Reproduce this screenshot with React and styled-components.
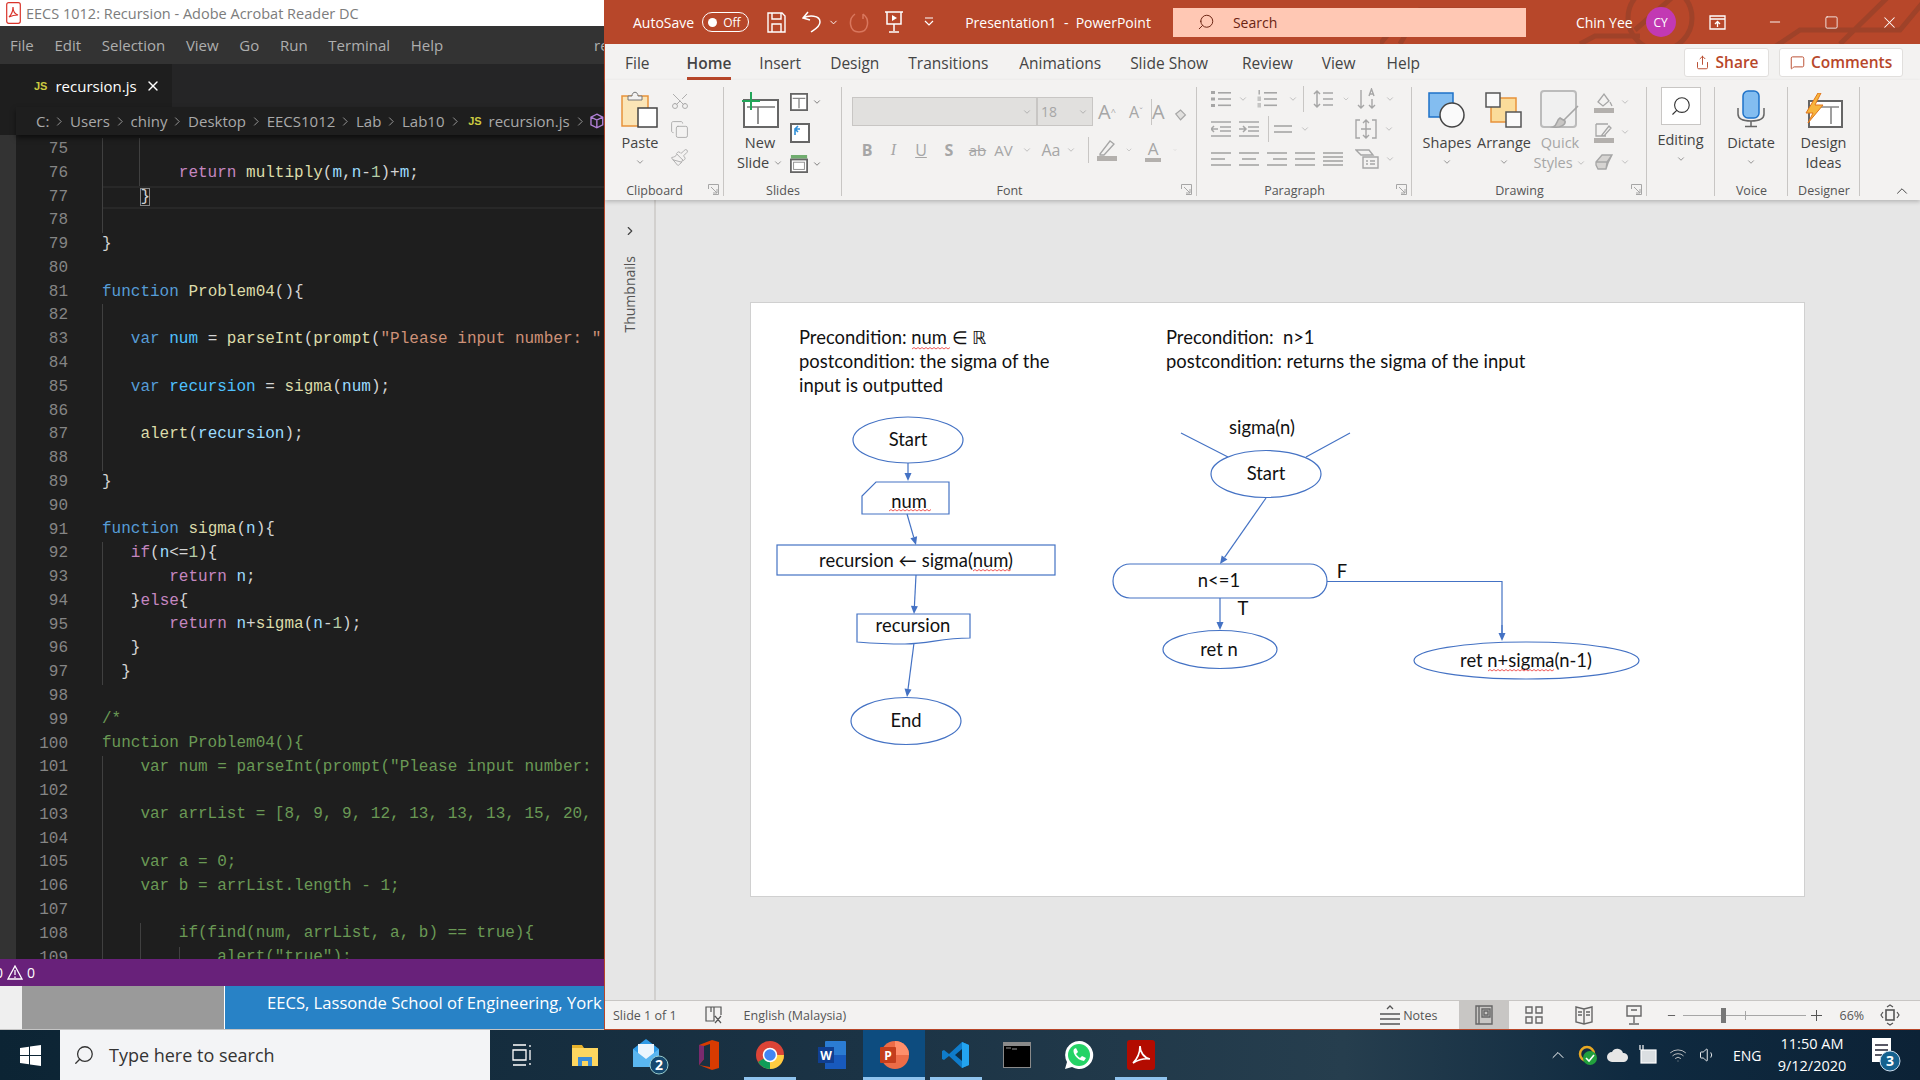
import React from "react";
import styled, { createGlobalStyle } from "styled-components";
import {
  ChevronDown, ChevronRight, ChevronUp, Copy, Scissors, Paintbrush, Search, X, Minus, Square,
  MessageSquare, Share, Wifi, Volume1,
} from "lucide-react";

const Global = createGlobalStyle`
  html, body { margin: 0; padding: 0; width: 1920px; height: 1080px; overflow: hidden; }
  body { font-family: "Open Sans", sans-serif; }
  * { box-sizing: border-box; }
`;

const Screen = styled.div`
  width: 1920px;
  height: 1080px;
  display: flex;
  flex-direction: column;
`;
const Windows = styled.div`
  height: 1030px;
  display: flex;
`;

/* ---------- vs code side ---------- */
const LeftWin = styled.section`
  width: 604px;
  flex: none;
  display: flex;
  flex-direction: column;
  background: #1e1e1e;
  overflow: hidden;
`;
const AcroTitle = styled.div`
  height: 26px;
  background: #fff;
  display: flex;
  align-items: center;
  gap: 5px;
  padding-left: 6px;
  font-size: 14.5px;
  color: #7c7c7c;
  white-space: nowrap;
`;
const MenuBar = styled.div`
  height: 38px;
  background: #333;
  display: flex;
  align-items: center;
  gap: 20.7px;
  padding-left: 10px;
  font-size: 15px;
  color: #aeaeae;
  overflow: hidden;
`;
const MenuClip = styled.span`
  margin-left: auto;
  width: 10px;
  overflow: hidden;
`;
const TabBar = styled.div`
  height: 43px;
  background: #252526;
  margin-left: 16px;
  display: flex;
`;
const TabItem = styled.div`
  width: 156px;
  background: #1e1e1e;
  display: flex;
  align-items: center;
  gap: 8px;
  padding-left: 18px;
  font-size: 15px;
  color: #fff;
`;
const JsBadge = styled.b`
  font: 700 11px "Liberation Sans", sans-serif;
  color: #cbcb41;
  margin-left: ${p => p.$ml || 0}px;
`;
const Crumbs = styled.div`
  height: 28px;
  margin-left: 16px;
  padding-left: 20px;
  background: #1e1e1e;
  display: flex;
  align-items: center;
  gap: 3px;
  font-size: 15px;
  color: #a9a9a9;
  white-space: nowrap;
  overflow: hidden;
  box-shadow: 0 3px 5px #0008;
  position: relative;
  z-index: 2;
`;
const EditorPane = styled.div`
  flex: 1;
  display: flex;
  min-height: 0;
  background: #1e1e1e;
  border-left: 16px solid #333;
  overflow: hidden;
  position: relative;
`;
const Gutter = styled.div`
  width: 52px;
  flex: none;
  padding-top: 3px;
  text-align: right;
  color: #858585;
  font: 16px/23.78px "Liberation Mono", monospace;
`;
const CodeCol = styled.div`
  margin-left: 34px;
  padding-top: 3px;
  flex: 1;
  min-width: 0;
  white-space: pre;
  font: 16px/23.78px "Liberation Mono", monospace;
  position: relative;
`;
const CodeLine = styled.div`
  height: 23.78px;
  ${p => p.$active && "box-shadow: inset 0 2px #282828, inset 0 -2px #282828;"}
`;
const Token = styled.span`
  color: ${p => p.$c};
`;
const BraceBox = styled.span`
  outline: 1px solid #888;
  outline-offset: -1px;
  color: #d4d4d4;
`;
const Guide = styled.i`
  position: absolute;
  width: 1px;
  background: #404040;
  left: ${p => p.$x}px;
  top: ${p => p.$from * 23.78 + 3}px;
  height: ${p => p.$n * 23.78}px;
`;
const PurpleBar = styled.div`
  height: 27px;
  background: #68217a;
  color: #fff;
  display: flex;
  align-items: center;
  gap: 4px;
  font-size: 14px;
`;
const ClippedZero = styled.span`
  margin-left: -5px;
`;
const PdfStrip = styled.div`
  height: 44px;
  display: flex;
  background: #efefef;
  border-bottom: 1px solid #c4c4c4;
`;
const GreyBlock = styled.div`
  width: 202px;
  margin-left: 22px;
  background: #9a9a9a;
`;
const BlueBlock = styled.div`
  flex: 1;
  min-width: 0;
  background: #2882c6;
  color: #fff;
  font-size: 16.6px;
  font-weight: 500;
  line-height: 34px;
  padding-left: 42px;
  white-space: nowrap;
  overflow: hidden;
  border-left: 1px solid #fff;
`;

/* ---------- powerpoint side ---------- */
const RightWin = styled.section`
  flex: 1;
  display: flex;
  flex-direction: column;
  border-left: 1px solid #b7472a;
  min-width: 0;
`;
const PptTitle = styled.header`
  height: 44px;
  background: #b7472a;
  color: #fff;
  display: flex;
  align-items: center;
  font-size: 14px;
  position: relative;
  white-space: nowrap;
  overflow: hidden;
`;
const TitlePattern = styled.svg`
  position: absolute;
  right: 0;
  top: 0;
`;
const TitleRow = styled.div`
  display: flex;
  flex: none;
  align-items: center;
  position: relative;
  margin-left: ${p => p.$ml || 0}px;
`;
const Toggle = styled.span`
  width: 47px;
  height: 20px;
  border: 1.5px solid #fff;
  border-radius: 10px;
  display: flex;
  align-items: center;
  gap: 6px;
  padding-left: 5px;
  font-size: 12px;
  margin-left: 8px;
  &::before {
    content: "";
    width: 9px;
    height: 9px;
    background: #fff;
    border-radius: 50%;
  }
`;
const SearchBox = styled.div`
  width: 353px;
  height: 29px;
  flex: none;
  margin-left: 22px;
  background: #ffc8b4;
  color: #6b2412;
  display: flex;
  align-items: center;
  gap: 18px;
  padding-left: 24px;
  position: relative;
  font-size: 14px;
`;
const Lens = styled(Search)`
  transform: scaleX(-1);
  flex: none;
`;
const Cut = styled(Scissors)`
  transform: rotate(-90deg);
`;
const UndoChev = styled(ChevronDown)`
  margin-left: 6px;
`;
const Mark = styled.sup`
  font-size: 9px;
`;
const Avatar = styled.span`
  width: 30px;
  height: 30px;
  border-radius: 50%;
  background: #c239b3;
  margin-left: 13px;
  font-size: 12px;
  display: grid;
  place-items: center;
`;
const TabsRow = styled.nav`
  height: 36px;
  background: #f3f2f1;
  display: flex;
  align-items: center;
  position: relative;
  font-size: 15.5px;
  color: #444;
`;
const RibbonTab = styled.span`
  margin-left: ${p => p.$ml}px;
  height: 36px;
  line-height: 38px;
  font-weight: ${p => p.$on ? 600 : 400};
  border-bottom: ${p => p.$on ? "3px solid #b7472a" : "none"};
`;
const TopBtn = styled.button`
  height: 29px;
  width: ${p => p.$w}px;
  flex: none;
  margin-left: ${p => p.$ml}px;
  background: #fff;
  border: 1px solid #e1dfdd;
  border-radius: 3px;
  font: 600 15.5px "Open Sans", sans-serif;
  color: #b7472a;
  display: flex;
  align-items: center;
  justify-content: center;
  gap: 6px;
  padding: 0;
`;
const Ribbon = styled.div`
  height: 120px;
  background: #f3f2f1;
  display: flex;
  box-shadow: 0 2px 4px #0003;
  position: relative;
  z-index: 1;
  font-size: 14.5px;
  color: #444;
`;
const Group = styled.div`
  width: ${p => p.$w}px;
  flex: none;
  position: relative;
  display: flex;
  padding-top: ${p => p.$pt ?? 8}px;
  align-items: flex-start;
  &::after {
    content: "";
    position: absolute;
    right: 0;
    top: 7px;
    bottom: 4px;
    width: 1px;
    background: #c8c6c4;
  }
`;
const GroupLabel = styled.span`
  position: absolute;
  left: 0;
  right: ${p => p.$r ?? 0}px;
  bottom: 0;
  text-align: center;
  font-size: 12.5px;
  color: #555;
  line-height: 18px;
`;
const Launcher = styled.svg`
  position: absolute;
  right: 5px;
  bottom: 5px;
`;
const BigBtn = styled.div`
  width: ${p => p.$w}px;
  flex: none;
  margin-left: ${p => p.$ml || 0}px;
  display: flex;
  flex-direction: column;
  align-items: center;
  line-height: 20px;
  color: ${p => p.$off ? "#a6a6a6" : "#444"};
  > svg.lucide { margin-top: 4px; }
`;
const ArtBox = styled.div`
  height: 37px;
  display: flex;
  align-items: flex-end;
  margin-bottom: ${p => p.$mb ?? 5}px;
`;
const EditBox = styled.div`
  width: 40px;
  height: 38px;
  border: 1px solid #c8c6c4;
  background: #fff;
  display: grid;
  place-items: center;
  margin-bottom: 5px;
`;
const SmallCol = styled.div`
  width: ${p => p.$w}px;
  flex: none;
  margin-left: ${p => p.$ml || 0}px;
  display: flex;
  flex-direction: column;
  gap: ${p => p.$gap ?? 8}px;
`;
const SmallRow = styled.div`
  height: ${p => p.$h || 22}px;
  display: flex;
  align-items: center;
  padding-left: ${p => p.$pl || 0}px;
  color: ${p => p.$c || "#a6a6a6"};
`;
const Slot = styled.span`
  width: ${p => p.$w}px;
  flex: none;
  display: flex;
  align-items: center;
  justify-content: center;
  font: ${p => p.$font || "inherit"};
  text-decoration: ${p => p.$deco || "none"};
`;
const BarGlyph = styled.span`
  font-size: 17px;
  line-height: 19px;
  padding: 0 3px;
  border-bottom: 4px solid #b3b0ad;
`;
const FontInput = styled.div`
  width: ${p => p.$w}px;
  height: 29px;
  flex: none;
  background: #e1e0de;
  border: 1px solid #c8c6c4;
  display: flex;
  align-items: center;
  justify-content: space-between;
  padding: 0 4px 0 3px;
  color: #a6a6a6;
  font-size: 14px;
`;
const VSep = styled.i`
  width: 1px;
  height: ${p => p.$h || 26}px;
  margin-left: ${p => p.$ml || 0}px;
  background: #c8c6c4;
  flex: none;
`;
const Collapse = styled.span`
  position: absolute;
  right: 9px;
  bottom: 0;
  color: #444;
  display: flex;
`;
const Body = styled.main`
  flex: 1;
  display: flex;
  background: #e6e6e6;
  min-height: 0;
  border-bottom: 1px solid #c8c6c4;
`;
const ThumbPane = styled.aside`
  width: 51px;
  flex: none;
  border-right: 2px solid #d2d0ce;
  display: flex;
  flex-direction: column;
  align-items: center;
  padding-top: 24px;
  gap: 18px;
  color: #444;
`;
const VertLabel = styled.span`
  writing-mode: vertical-rl;
  transform: rotate(180deg);
  font-size: 14px;
  color: #555;
`;
const SlideArea = styled.div`
  flex: 1;
  padding: 103px 0 0 95px;
`;
const Slide = styled.svg`
  display: block;
  width: 1053px;
  height: 593px;
  background: #fff;
  outline: 1px solid #d0d0d0;
`;
const Label = styled.text`
  font: 18.4px Lato, sans-serif;
  fill: #111;
  text-anchor: ${p => p.$a || "middle"};
  dominant-baseline: central;
  transform: translateY(-1px);
`;
const PptStatus = styled.footer`
  height: 29px;
  background: #f3f2f1;
  border-bottom: 1px solid #b7472a;
  display: flex;
  align-items: center;
  font-size: 12.5px;
  color: #555;
`;
const StatusSlot = styled.span`
  margin-left: ${p => p.$ml || 0}px;
  width: ${p => (p.$w ? p.$w + "px" : "auto")};
  flex: none;
  height: 28px;
  display: flex;
  align-items: center;
  justify-content: ${p => p.$w ? "center" : "flex-start"};
  gap: 3px;
  background: ${p => p.$on ? "#c8c6c4" : "transparent"};
  white-space: nowrap;
`;
const SliderTrack = styled.span`
  width: 123px;
  flex: none;
  height: 1px;
  margin-left: 6px;
  background: #a6a6a6;
  position: relative;
  &::before {
    content: "";
    position: absolute;
    left: 38px;
    top: -7px;
    width: 5px;
    height: 15px;
    background: #777;
  }
  &::after {
    content: "";
    position: absolute;
    left: 62px;
    top: -4px;
    width: 1px;
    height: 9px;
    background: #a6a6a6;
  }
`;

/* ---------- taskbar ---------- */
const TaskBar = styled.footer`
  height: 50px;
  background: linear-gradient(90deg, #0c2434 0%, #1b3345 45%, #263e4e 70%, #0f2a40 85%, #0c2236 100%);
  display: flex;
  align-items: center;
  color: #fff;
`;
const StartBtn = styled.span`
  width: 60px;
  flex: none;
  display: grid;
  place-items: center;
`;
const TaskSearch = styled.div`
  width: 430px;
  flex: none;
  height: 50px;
  background: #f3f4f6;
  color: #333;
  font-size: 18px;
  display: flex;
  align-items: center;
  gap: 14px;
  padding-left: 13px;
`;
const TaskIcon = styled.span`
  width: ${p => p.$w || 61.8}px;
  flex: none;
  height: 50px;
  display: grid;
  place-items: center;
  position: relative;
  background: ${p => p.$active ? "#0d4c7f" : "transparent"};
  ${p => p.$open && `&::after {
    content: "";
    position: absolute;
    left: 5px;
    right: 5px;
    bottom: 0;
    height: 3px;
    background: #8fc3ee;
  }`}
  ${p => p.$active && "&::after { left: 0; right: 0; }"}
`;
const Tray = styled.div`
  margin-left: auto;
  display: flex;
  align-items: center;
  height: 50px;
`;
const TraySlot = styled.span`
  width: 30px;
  display: grid;
  place-items: center;
`;
const TrayText = styled.span`
  font-size: 14px;
  margin-left: 10px;
  width: 37px;
`;
const Clock = styled.div`
  width: 84px;
  text-align: center;
  font-size: 14.5px;
  line-height: 22px;
`;
const NoteIcon = styled.span`
  width: 66px;
  display: grid;
  place-items: center;
`;
const MailArt = styled.svg`
  margin-left: 7px;
`;

/* ---------- code data ---------- */
const K = "#569cd6", C = "#c586c0", F = "#dcdcaa", V = "#9cdcfe", M = "#4fc1ff", S = "#ce9178", N = "#b5cea8", P = "#d4d4d4", G = "#6a9955";

const code = [
  [],
  [["        "], [C, "return "], [F, "multiply"], [P, "("], [V, "m"], [P, ","], [V, "n"], [P, "-"], [N, "1"], [P, ")+"], [V, "m"], [P, ";"]],
  "brace",
  [],
  [[P, "}"]],
  [],
  [[K, "function "], [F, "Problem04"], [P, "(){"]],
  [],
  [["   "], [K, "var "], [M, "num"], [P, " = "], [F, "parseInt"], [P, "("], [F, "prompt"], [P, "("], [S, "\"Please input number: \""]],
  [],
  [["   "], [K, "var "], [M, "recursion"], [P, " = "], [F, "sigma"], [P, "("], [V, "num"], [P, ");"]],
  [],
  [["    "], [F, "alert"], [P, "("], [V, "recursion"], [P, ");"]],
  [],
  [[P, "}"]],
  [],
  [[K, "function "], [F, "sigma"], [P, "("], [V, "n"], [P, "){"]],
  [["   "], [C, "if"], [P, "("], [V, "n"], [P, "<="], [N, "1"], [P, "){"]],
  [["       "], [C, "return "], [V, "n"], [P, ";"]],
  [["   "], [P, "}"], [C, "else"], [P, "{"]],
  [["       "], [C, "return "], [V, "n"], [P, "+"], [F, "sigma"], [P, "("], [V, "n"], [P, "-"], [N, "1"], [P, ");"]],
  [["   "], [P, "}"]],
  [["  "], [P, "}"]],
  [],
  [[G, "/*"]],
  [[G, "function Problem04(){"]],
  [[G, "    var num = parseInt(prompt(\"Please input number:"]],
  [],
  [[G, "    var arrList = [8, 9, 9, 12, 13, 13, 13, 15, 20,"]],
  [],
  [[G, "    var a = 0;"]],
  [[G, "    var b = arrList.length - 1;"]],
  [],
  [[G, "        if(find(num, arrList, a, b) == true){"]],
  [[G, "            alert(\"true\");"]],
];

const squiggle = (x0, x1, y) => {
  let d = `M${x0} ${y}`;
  let up = true;
  for (let x = x0 + 2; x <= x1; x += 2) {
    d += `L${x} ${up ? y - 1.5 : y}`;
    up = !up;
  }
  return d;
};

const BLUE = "#4472c4";
const Arrow = ({ x1, y1, x2, y2 }) => {
  const a = Math.atan2(y2 - y1, x2 - x1);
  const l = 8, w = 3.5;
  const bx = x2 - l * Math.cos(a), by = y2 - l * Math.sin(a);
  const nx = -Math.sin(a) * w, ny = Math.cos(a) * w;
  return (
    <g>
      <line x1={x1} y1={y1} x2={bx} y2={by} stroke={BLUE} strokeWidth="1.2" />
      <polygon points={`${x2},${y2} ${bx + nx},${by + ny} ${bx - nx},${by - ny}`} fill={BLUE} />
    </g>
  );
};
const Shape = { fill: "none", stroke: BLUE, strokeWidth: 1.2 };

const Diagram = () => (
  <Slide viewBox="751 303 1053 593">
    <Label $a="start" x="799" y="338">Precondition: num ∈ ℝ</Label>
    <Label $a="start" x="799" y="362">postcondition: the sigma of the</Label>
    <Label $a="start" x="799" y="386">input is outputted</Label>
    <path d={squiggle(912, 951, 349)} fill="none" stroke="#e33" strokeWidth="0.8" />

    <Label $a="start" x="1166" y="338">{"Precondition:\u00A0 n>1"}</Label>
    <Label $a="start" x="1166" y="362">postcondition: returns the sigma of the input</Label>

    <ellipse cx="908" cy="440" rx="55" ry="23" {...Shape} />
    <Label x="908" y="440">Start</Label>
    <Arrow x1={908} y1={463} x2={908} y2={481} />
    <path d="M876 482H949V514H862V496Z" {...Shape} />
    <Label x="909" y="502">num</Label>
    <path d={squiggle(889, 931, 511)} fill="none" stroke="#e33" strokeWidth="0.8" />
    <Arrow x1={907} y1={514} x2={916} y2={545} />
    <rect x="777" y="545" width="278" height="30" {...Shape} />
    <Label x="916" y="561">recursion ← sigma(num)</Label>
    <path d={squiggle(973, 1012, 571)} fill="none" stroke="#e33" strokeWidth="0.8" />
    <Arrow x1={916} y1={575} x2={914} y2={614} />
    <path d="M857 614H970V638C940 638 930 644 905 644C885 644 870 643 857 642Z" {...Shape} />
    <Label x="913" y="626">recursion</Label>
    <Arrow x1={914} y1={643} x2={907} y2={697} />
    <ellipse cx="906" cy="721" rx="55" ry="23.5" {...Shape} />
    <Label x="906" y="721">End</Label>

    <Label x="1262" y="428">sigma(n)</Label>
    <path d="M1181 433L1228 457M1350 433L1306 457" fill="none" stroke={BLUE} strokeWidth="1.1" />
    <ellipse cx="1266" cy="474" rx="55" ry="23.5" {...Shape} />
    <Label x="1266" y="474">Start</Label>
    <Arrow x1={1266} y1={498} x2={1220} y2={564} />
    <rect x="1113" y="564" width="214" height="34" rx="17" {...Shape} />
    <Label x="1219" y="581">n&lt;=1</Label>
    <Arrow x1={1220} y1={598} x2={1220} y2={630} />
    <Label x="1243" y="609">T</Label>
    <Label x="1342" y="572">F</Label>
    <path d="M1327 581.5H1502V633" fill="none" stroke={BLUE} strokeWidth="1.2" />
    <Arrow x1={1502} y1={625} x2={1502} y2={641} />
    <ellipse cx="1220" cy="649.5" rx="57" ry="19" {...Shape} />
    <Label x="1219" y="650">ret n</Label>
    <ellipse cx="1526.5" cy="660.5" rx="112.5" ry="18.5" {...Shape} />
    <Label x="1526" y="661">ret n+sigma(n-1)</Label>
    <path d={squiggle(1488, 1555, 671)} fill="none" stroke="#e33" strokeWidth="0.8" />
  </Slide>
);

/* ---------- drawn icons ---------- */
const Chev = ({ c = "#666" }) => <ChevronDown size={10} color={c} strokeWidth={1.6} />;
const GREY = "#a6a6a6";
const Lines = ({ w = 20, h = 18, n = 3, ind = [], c = GREY }) => (
  <svg width={w} height={h} viewBox={`0 0 ${w} ${h}`} fill="none" stroke={c} strokeWidth="1.6">
    {Array.from({ length: n }).map((_, i) => (
      <line key={i} x1={ind[i]?.[0] ?? 0} x2={ind[i]?.[1] ?? w} y1={3 + i * ((h - 6) / (n - 1))} y2={3 + i * ((h - 6) / (n - 1))} />
    ))}
  </svg>
);
const Bullets = () => (
  <svg width="20" height="18" viewBox="0 0 20 18" fill={GREY}>
    <rect x="0" y="1" width="4" height="3" /><rect x="0" y="7.5" width="4" height="3" /><rect x="0" y="14" width="4" height="3" />
    <rect x="7" y="2" width="13" height="1.6" /><rect x="7" y="8.2" width="13" height="1.6" /><rect x="7" y="14.5" width="13" height="1.6" />
  </svg>
);
const Numbers = () => (
  <svg width="20" height="18" viewBox="0 0 20 18" fill={GREY}>
    <rect x="1.5" y="0" width="1.4" height="4.5" /><rect x="0.5" y="6.5" width="3.5" height="4.5" fillOpacity=".6" /><rect x="0.5" y="13" width="3.5" height="4.5" fillOpacity=".6" />
    <rect x="7" y="2" width="13" height="1.6" /><rect x="7" y="8.2" width="13" height="1.6" /><rect x="7" y="14.5" width="13" height="1.6" />
  </svg>
);
const LineSpacing = () => (
  <svg width="20" height="20" viewBox="0 0 20 20" fill="none" stroke={GREY} strokeWidth="1.5">
    <path d="M4 2V18M1 5L4 2L7 5M1 15L4 18L7 15M10 4H20M10 10H20M10 16H20" />
  </svg>
);
const SortIcon = () => (
  <svg width="20" height="22" viewBox="0 0 20 22" fill="none" stroke={GREY} strokeWidth="1.4">
    <path d="M4 2V20M1 17L4 20L7 17M15 11V20M12 17L15 20L18 17M12 8L14.5 1L17 8M13 6H16" />
  </svg>
);
const Indent = ({ more }) => (
  <svg width="20" height="18" viewBox="0 0 20 18" fill="none" stroke={GREY} strokeWidth="1.5">
    <path d="M0 2H20M9 7H20M9 11H20M0 16H20" />
    <path d={more ? "M0 9H7M4 6L7 9L4 12" : "M7 9H0M3 6L0 9L3 12"} />
  </svg>
);
const VAlign = () => (
  <svg width="22" height="22" viewBox="0 0 22 22" fill="none" stroke={GREY} strokeWidth="1.4">
    <path d="M5 2H1V20H5M17 2H21V20H17M11 2V20M8 5L11 2L14 5M8 17L11 20L14 17M6 11H16" />
  </svg>
);
const SmartArt = () => (
  <svg width="24" height="20" viewBox="0 0 24 20" fill="none" stroke={GREY} strokeWidth="1.4">
    <path d="M1 1H14L18 6H6ZM8 8H23V19H8ZM11 12H13M15 12H20M11 15H13M15 15H20" />
  </svg>
);
const ClearFmt = () => (
  <svg width="24" height="24" viewBox="0 0 24 24" fill="none" stroke={GREY} strokeWidth="1.2">
    <path d="M11 14L16 10L21 15L16 20Z" fill="#e1e0de" />
  </svg>
);
const Launch = () => (
  <Launcher width="11" height="11" viewBox="0 0 11 11" fill="none" stroke={GREY}>
    <path d="M.5 5V.5H10.5V10.5H5M3 3L9 9M9 5V9H5" />
  </Launcher>
);
const Pdf = () => (
  <svg width="15" height="22" viewBox="0 0 15 22">
    <rect x=".7" y=".7" width="13.6" height="20.6" rx="2" fill="#fff" stroke="#d9332a" strokeWidth="1.2" />
    <path d="M3 15C6 12 7 8 7 5C7 9 9 12 12 13C9 13 5 14 3 15Z" fill="none" stroke="#d9332a" strokeWidth="1.2" />
  </svg>
);
const PasteArt = () => (
  <svg width="38" height="38" viewBox="0 0 38 38">
    <rect x="1" y="6" width="26" height="30" fill="#fbe5b6" stroke="#e8923a" strokeWidth="1.5" />
    <path d="M7 10V6H11C11 1 17 1 17 6H21V10Z" fill="#f3f2f1" stroke="#777" />
    <rect x="17" y="18" width="19" height="19" fill="#fff" stroke="#444" strokeWidth="1.5" />
  </svg>
);
const NewSlideArt = () => (
  <svg width="38" height="36" viewBox="0 0 38 36" fill="none">
    <rect x="3" y="8" width="34" height="27" fill="#fff" stroke="#666" strokeWidth="2" />
    <path d="M6 15H34M17 15V32" stroke="#777" strokeWidth="1.6" />
    <path d="M10 0V18M1 9H19" stroke="#22a559" strokeWidth="2" />
  </svg>
);
const SlideSmall = ({ kind }) => (
  <svg width="20" height="20" viewBox="0 0 20 20" fill="none">
    {kind === "green" && <rect x="1" y="0" width="18" height="4" fill="#70ad6f" />}
    <rect x="1" y={kind === "green" ? 5 : 1} width="18" height={kind === "green" ? 14 : 18} fill="#fff" stroke="#666" strokeWidth="2" />
    {kind === "layout" && <path d="M3 6H17M10 6V17" stroke="#888" strokeWidth="1.5" />}
    {kind === "reset" && <path d="M5 12V6H10M5 6L8 3M5 6L8 9" stroke="#2f8fd8" strokeWidth="1.6" />}
    {kind === "green" && <rect x="4" y="8" width="12" height="8" stroke="#888" />}
  </svg>
);
const ShapesArt = () => (
  <svg width="38" height="36" viewBox="0 0 38 36">
    <rect x="1" y="1" width="24" height="24" fill="#83bdf0" stroke="#1e72c8" strokeWidth="1.5" />
    <circle cx="24" cy="23" r="12" fill="#fafafa" stroke="#444" strokeWidth="1.5" />
  </svg>
);
const ArrangeArt = () => (
  <svg width="38" height="36" viewBox="0 0 38 36">
    <rect x="6" y="6" width="25" height="24" fill="#fbdc9a" stroke="#e8923a" strokeWidth="1.5" />
    <rect x="1" y="1" width="14" height="14" fill="#fafafa" stroke="#555" strokeWidth="1.5" />
    <rect x="21" y="20" width="15" height="15" fill="#fafafa" stroke="#555" strokeWidth="1.5" />
  </svg>
);
const QuickArt = () => (
  <svg width="40" height="38" viewBox="0 0 40 38" fill="none">
    <rect x="1" y="1" width="35" height="36" rx="3" fill="#f0f0f0" stroke="#bbb" strokeWidth="2" />
    <path d="M38 16L24 30M20 28C16 30 18 35 13 37C20 38 26 35 25 31Z" stroke={GREY} strokeWidth="1.6" fill="#c8c6c4" />
  </svg>
);
const DrawSmall = ({ kind }) => (
  <svg width="20" height="22" viewBox="0 0 20 22" fill="none" stroke={GREY} strokeWidth="1.3">
    {kind === "fill" && <path d="M4 11L10 3L15 10L9 15ZM16 11L18 15" />}
    {kind === "line" && <path d="M2 3H14M2 3V15H12M8 14L15 5L17 7L10 15Z" />}
    {kind === "pen" && <path d="M3 15L13 2L17 5L7 16L3 16Z" />}
    {kind !== "erase" && <rect x="0" y="17" width="20" height="5" fill="#b3b0ad" stroke="none" />}
    {kind === "erase" && <path d="M2 11L8 4H18L14 12L12 18H4L2 14ZM2 11H13L12 18M13 11L18 4" fill="#d6d4d2" />}
  </svg>
);
const MicArt = () => (
  <svg width="30" height="38" viewBox="0 0 30 38" fill="none">
    <rect x="7" y="1" width="16" height="27" rx="5" fill="#83bdf0" stroke="#1e72c8" strokeWidth="1.5" />
    <path d="M2 18V24C2 30 8 31 15 31C22 31 28 30 28 24V18" stroke="#666" strokeWidth="1.5" />
    <path d="M15 31V36M9 36.5H21" stroke="#666" strokeWidth="1.5" />
  </svg>
);
const DesignArt = () => (
  <svg width="38" height="35" viewBox="0 0 38 35" fill="none">
    <rect x="4" y="8" width="33" height="26" fill="#fff" stroke="#666" strokeWidth="2" />
    <path d="M8 14H34M26 14V31" stroke="#888" strokeWidth="1.6" />
    <path d="M13 0L1 20H8L3 30L18 12H10L16 0Z" fill="#f7b53c" stroke="#e0761c" />
  </svg>
);
const Save = () => (
  <svg width="19" height="21" viewBox="0 0 19 21" fill="none" stroke="#fff" strokeWidth="1.4">
    <path d="M1 1H15L18 4V20H1ZM5 1V7H14V1M5 20V12H14V20" />
  </svg>
);
const Undo = () => (
  <svg width="20" height="22" viewBox="0 0 20 22" fill="none" stroke="#fff" strokeWidth="1.5">
    <path d="M6 1L1 7L8 9M1 7C7 4 18 4 18 11C18 16 12 19 9 21" />
  </svg>
);
const Redo = () => (
  <svg width="20" height="22" viewBox="0 0 20 22" fill="none" stroke="#d9775e" strokeWidth="1.5">
    <path d="M6 3C-1 8 0 21 10 21C20 21 21 8 14 3M14 3V8" />
  </svg>
);
const Present = () => (
  <svg width="20" height="22" viewBox="0 0 20 22" fill="none" stroke="#fff" strokeWidth="1.5">
    <path d="M3 1H17V13H3ZM1 1H19M10 13V20M5 21H15" />
    <path d="M8 4L13 7L8 10Z" fill="#fff" stroke="none" />
  </svg>
);
const Customize = () => (
  <svg width="10" height="10" viewBox="0 0 10 10" fill="none" stroke="#fff" strokeWidth="1.2">
    <path d="M1 1H9M1 4L5 8L9 4" />
  </svg>
);
const RibbonOpts = () => (
  <svg width="17" height="15" viewBox="0 0 17 15" fill="none" stroke="#fff" strokeWidth="1.3">
    <path d="M1 1H16V14H1ZM1 4H16M8.5 12V7M6 9L8.5 6.5L11 9" />
  </svg>
);
const Winlogo = () => (
  <svg width="21" height="21" viewBox="0 0 21 21" fill="#fff">
    <path d="M0 3L9 1.7V10H0ZM10 1.5L21 0V10H10ZM0 11H9V19.3L0 18ZM10 11H21V21L10 19.5Z" />
  </svg>
);
const TaskView = () => (
  <svg width="20" height="22" viewBox="0 0 20 22" fill="none" stroke="#fff" strokeWidth="1.3">
    <path d="M1 1H14M1 21H14M1 6H14V16H1ZM18 1V3M18 6V16M18 19V21" />
  </svg>
);
const Explorer = () => (
  <svg width="28" height="28" viewBox="0 0 28 28">
    <path d="M1 4H11L13 7H27V25H1Z" fill="#e6b22c" />
    <rect x="1" y="7" width="26" height="18" fill="#fdd65f" />
    <path d="M7 25V16H21V25H17V20H11V25Z" fill="#3b8bd6" />
  </svg>
);
const Mail = () => (
  <MailArt width="42" height="40" viewBox="0 0 42 40">
    <path d="M4 14L17 4L30 14V32H4Z" fill="#2d9ae6" />
    <path d="M9 9H25V20L17 25L9 20Z" fill="#eaf5fd" />
    <path d="M4 14L17 24L30 14V32H4Z" fill="#5ab6f0" />
    <circle cx="30" cy="30" r="9" fill="#15496f" stroke="#9cc" />
    <text x="30" y="35" fontSize="14" fontWeight="700" fill="#fff" textAnchor="middle" fontFamily="Open Sans">2</text>
  </MailArt>
);
const Office = () => (
  <svg width="24" height="32" viewBox="0 0 24 32">
    <path d="M3 6L16 1L23 3V29L16 31L3 26L14 28V5L8 7V20L3 26Z" fill="#d83b01" />
    <path d="M3 6L8 7V20L3 26Z" fill="#7a2a6e" />
  </svg>
);
const Chrome = () => (
  <svg width="30" height="30" viewBox="0 0 30 30">
    <circle cx="15" cy="15" r="14" fill="#db4437" />
    <path d="M15 15L27 22A14 14 0 0 1 8 27Z" fill="#0f9d58" />
    <path d="M15 15H29A14 14 0 0 1 15 29L8 27Z" fill="#ffcd40" />
    <path d="M15 15L3 22A14 14 0 0 0 15 29Z" fill="#0f9d58" />
    <circle cx="15" cy="15" r="6.5" fill="#4285f4" stroke="#fff" strokeWidth="1.5" />
  </svg>
);
const Word = () => (
  <svg width="30" height="30" viewBox="0 0 30 30">
    <rect x="8" y="1" width="21" height="28" rx="1" fill="#2b7cd3" />
    <rect x="8" y="15" width="21" height="14" fill="#185abd" />
    <rect x="1" y="7" width="16" height="16" fill="#103f91" />
    <text x="9" y="20" fontSize="12" fontWeight="700" fill="#fff" textAnchor="middle" fontFamily="Open Sans">W</text>
  </svg>
);
const Ppt = () => (
  <svg width="32" height="30" viewBox="0 0 32 30">
    <circle cx="17" cy="15" r="14" fill="#ed6c47" />
    <path d="M17 1A14 14 0 0 1 31 15H17Z" fill="#ff8f6b" />
    <rect x="2" y="7" width="16" height="16" rx="1" fill="#c43e1c" />
    <text x="10" y="20" fontSize="12" fontWeight="700" fill="#fff" textAnchor="middle" fontFamily="Open Sans">P</text>
  </svg>
);
const Vscode = () => (
  <svg width="28" height="28" viewBox="0 0 28 28">
    <path d="M20 1L27 4V24L20 27L7 15L2 19L0 18V10L2 9L7 13Z" fill="#0f7ccb" />
    <path d="M20 1L27 4V24L20 27Z" fill="#23a4f0" />
    <path d="M20 8L13 14L20 20Z" fill="#0c2e47" />
  </svg>
);
const Cmd = () => (
  <svg width="28" height="28" viewBox="0 0 28 28">
    <rect x="0" y="1" width="28" height="26" fill="#8a8a8a" />
    <rect x="1" y="5" width="26" height="21" fill="#000" />
    <path d="M3 7H8M9 8H14" stroke="#bbb" strokeWidth="0.8" />
  </svg>
);
const WhatsApp = () => (
  <svg width="30" height="30" viewBox="0 0 30 30">
    <path d="M15 1A14 14 0 0 0 3 22L1 29L8 27A14 14 0 1 0 15 1Z" fill="#fff" />
    <circle cx="15" cy="15" r="11" fill="#25d366" />
    <path d="M10 9C8 12 12 20 20 21L22 18L18 16L16 18C14 17 13 15 12 14L14 12L12 8Z" fill="#fff" />
  </svg>
);
const Acrobat = () => (
  <svg width="28" height="30" viewBox="0 0 28 30">
    <rect x="0" y="0" width="28" height="30" rx="3" fill="#b30b00" />
    <path d="M6 23C11 18 13 12 13 6C13 12 17 18 23 19C17 18 11 20 6 23Z" fill="none" stroke="#fff" strokeWidth="1.7" />
  </svg>
);
const Norton = () => (
  <svg width="20" height="24" viewBox="0 0 20 24">
    <circle cx="9" cy="11" r="7" fill="none" stroke="#e8a823" strokeWidth="2.5" />
    <circle cx="12" cy="15" r="7" fill="#22a03d" />
    <path d="M8 15L11 18L16 12" stroke="#fff" strokeWidth="1.6" fill="none" />
  </svg>
);
const Cloud = () => (
  <svg width="22" height="14" viewBox="0 0 22 14" fill="#e6e6e6">
    <path d="M5 14A5 5 0 0 1 5 4A6 6 0 0 1 16 5A4.5 4.5 0 0 1 17 14Z" />
  </svg>
);
const Battery = () => (
  <svg width="20" height="20" viewBox="0 0 20 20" fill="none" stroke="#fff" strokeWidth="1.2">
    <rect x="3" y="5" width="15" height="13" fill="#fff" fillOpacity=".85" />
    <path d="M2 0V5M5 0V5" />
  </svg>
);
const NoteMark = () => (
  <svg width="32" height="36" viewBox="0 0 32 36">
    <rect x="1" y="1" width="19" height="24" fill="#fff" />
    <path d="M4 8H17M4 13H17M4 18H12" stroke="#223" strokeWidth="1.4" />
    <circle cx="19" cy="24" r="10" fill="#15618f" stroke="#cde" />
    <text x="19" y="29" fontSize="14" fontWeight="700" fill="#fff" textAnchor="middle" fontFamily="Open Sans">3</text>
  </svg>
);
const ViewIcon = ({ kind }) => (
  <svg width="20" height="20" viewBox="0 0 20 20" fill="none" stroke="#666" strokeWidth="1.4">
    {kind === "normal" && <path d="M2 1H18V19H2ZM5 1V19M8 4H16V12H8ZM10 6H14V10H10Z" />}
    {kind === "sorter" && <path d="M2 2H8V8H2ZM12 2H18V8H12ZM2 12H8V18H2ZM12 12H18V18H12Z" />}
    {kind === "read" && <path d="M2 2L10 4L18 2V17L10 19L2 17ZM10 4V19M4 7H8M4 10H8M12 7H16M12 10H16" />}
    {kind === "show" && <path d="M3 1H17V11H3ZM10 11V18M5 19H15M7 5H13" />}
  </svg>
);
const Fit = () => (
  <svg width="22" height="22" viewBox="0 0 22 22" fill="none" stroke="#555" strokeWidth="1.2">
    <rect x="7" y="6" width="8" height="10" strokeWidth="1.6" />
    <path d="M8 3L11 1L14 3M8 19L11 21L14 19M4 8L2 11L4 14M18 8L20 11L18 14" />
  </svg>
);
const NotesIcon = () => (
  <svg width="20" height="20" viewBox="0 0 20 20" fill="none" stroke="#555" strokeWidth="1.3">
    <path d="M7 4L10 1L13 4M0 9H20M0 14H20M0 19H20" />
  </svg>
);
const SpellIcon = () => (
  <svg width="18" height="18" viewBox="0 0 18 18" fill="none" stroke="#555" strokeWidth="1.2">
    <path d="M1 1H9V15H1ZM9 1H16V9M10 10L16 17M16 10L10 17M6 1V6" />
  </svg>
);

const tabs = [["File", 20], ["Home", 37, true], ["Insert", 28], ["Design", 29], ["Transitions", 29], ["Animations", 31], ["Slide Show", 29], ["Review", 34], ["View", 29], ["Help", 31]];
const GC = <Chev c={GREY} />;

const App = () => (
  <Screen>
    <Global />
    <Windows>
      <LeftWin>
        <AcroTitle><Pdf />EECS 1012: Recursion - Adobe Acrobat Reader DC</AcroTitle>
        <MenuBar>
          {["File", "Edit", "Selection", "View", "Go", "Run", "Terminal", "Help"].map(m => <span key={m}>{m}</span>)}
          <MenuClip>re</MenuClip>
        </MenuBar>
        <TabBar>
          <TabItem><JsBadge>JS</JsBadge>recursion.js<X size={16} color="#fff" /></TabItem>
        </TabBar>
        <Crumbs>
          {["C:", "Users", "chiny", "Desktop", "EECS1012", "Lab", "Lab10"].map(c => (
            <React.Fragment key={c}>{c}<ChevronRight size={15} strokeWidth={1.4} /></React.Fragment>
          ))}
          <JsBadge $ml={3}>JS</JsBadge>&nbsp;recursion.js<ChevronRight size={15} strokeWidth={1.4} />
          <svg width="14" height="16" viewBox="0 0 14 16" fill="none" stroke="#b180d7" strokeWidth="1.4"><path d="M7 1L13 4V12L7 15L1 12V4ZM1 4L7 7L13 4M7 7V15" /></svg>
        </Crumbs>
        <EditorPane>
          <Gutter>
            {code.map((_, i) => <div key={i}>{75 + i}</div>)}
          </Gutter>
          <CodeCol>
            <Guide $x={0} $from={0} $n={4} />
            <Guide $x={37} $from={0} $n={2} />
            <Guide $x={0} $from={7} $n={7} />
            <Guide $x={0} $from={17} $n={6} />
            <Guide $x={0} $from={26} $n={9} />
            <Guide $x={38} $from={33} $n={2} />
            <Guide $x={77} $from={34} $n={1} />
            {code.map((line, i) =>
              line === "brace" ? (
                <CodeLine key={i} $active>{"    "}<BraceBox>{"}"}</BraceBox></CodeLine>
              ) : (
                <CodeLine key={i}>
                  {line.map((t, j) => t.length === 1
                    ? <span key={j}>{t[0]}</span>
                    : <Token key={j} $c={t[0]}>{t[1]}</Token>)}
                </CodeLine>
              )
            )}
          </CodeCol>
        </EditorPane>
        <PurpleBar><ClippedZero>0</ClippedZero><svg width="16" height="15" viewBox="0 0 16 15" fill="none" stroke="#fff" strokeWidth="1.3"><path d="M8 1L15 14H1ZM8 5V10M8 11.5V13" /></svg>0</PurpleBar>
        <PdfStrip>
          <GreyBlock />
          <BlueBlock>EECS, Lassonde School of Engineering, York University</BlueBlock>
        </PdfStrip>
      </LeftWin>

      <RightWin>
        <PptTitle>
          <TitlePattern width="540" height="44" viewBox="0 0 540 44" fill="none" stroke="#9f4229" strokeWidth="5">
            <circle cx="280" cy="18" r="32" />
            <path d="M255 30L295 -5M140 10H40L20 44M0 44L20 20M390 50L420 30H520L545 0M460 44L510 -5M200 44L215 36H260" />
          </TitlePattern>
          <TitleRow $ml={28}>AutoSave<Toggle>Off</Toggle></TitleRow>
          <TitleRow $ml={18}><Save /></TitleRow>
          <TitleRow $ml={16}><Undo /><UndoChev size={11} /></TitleRow>
          <TitleRow $ml={10}><Redo /></TitleRow>
          <TitleRow $ml={15}><Present /></TitleRow>
          <TitleRow $ml={20}><Customize /></TitleRow>
          <TitleRow $ml={31}>Presentation1&nbsp; -&nbsp; PowerPoint</TitleRow>
          <SearchBox><Lens size={18} strokeWidth={1.3} />Search</SearchBox>
          <TitleRow $ml={50}>Chin Yee<Avatar>CY</Avatar></TitleRow>
          <TitleRow $ml={33}><RibbonOpts /></TitleRow>
          <TitleRow $ml={41}><Minus size={16} strokeWidth={1.4} /></TitleRow>
          <TitleRow $ml={41}><Square size={15} strokeWidth={1.3} /></TitleRow>
          <TitleRow $ml={41}><X size={19} strokeWidth={1.3} /></TitleRow>
        </PptTitle>

        <TabsRow>
          {tabs.map(([t, ml, on]) => <RibbonTab key={t} $ml={ml} $on={on}>{t}</RibbonTab>)}
          <TopBtn $ml={264} $w={85}><Share size={15} strokeWidth={1.5} />Share</TopBtn>
          <TopBtn $ml={10} $w={124}><MessageSquare size={15} strokeWidth={1.5} />Comments</TopBtn>
        </TabsRow>

        <Ribbon>
          <Group $w={119} $pt={11}>
            <BigBtn $w={70}>
              <ArtBox><PasteArt /></ArtBox>
              Paste
              <Chev />
            </BigBtn>
            <SmallCol $w={24} $ml={-5} $gap={8}>
              <SmallRow $h={20}><Cut size={20} strokeWidth={1.1} /></SmallRow>
              <SmallRow $h={20}><Copy size={19} strokeWidth={1.1} /></SmallRow>
              <SmallRow $h={20}><Paintbrush size={19} strokeWidth={1.1} /></SmallRow>
            </SmallCol>
            <GroupLabel $r={20}>Clipboard</GroupLabel>
            <Launch />
          </Group>
          <Group $w={118} $pt={11}>
            <BigBtn $w={72}>
              <ArtBox><NewSlideArt /></ArtBox>
              New
              <span>Slide <Chev /></span>
            </BigBtn>
            <SmallCol $w={36} $ml={-6} $gap={9}>
              <SmallRow $h={22} $c="#666"><SlideSmall kind="layout" /><Slot $w={18}><Chev c="#444" /></Slot></SmallRow>
              <SmallRow $h={22} $c="#666"><SlideSmall kind="reset" /></SmallRow>
              <SmallRow $h={22} $c="#666"><SlideSmall kind="green" /><Slot $w={18}><Chev c="#444" /></Slot></SmallRow>
            </SmallCol>
            <GroupLabel>Slides</GroupLabel>
          </Group>
          <Group $w={355} $pt={17}>
            <SmallCol $w={345} $ml={10} $gap={12}>
              <SmallRow $h={29}>
                <FontInput $w={185}><span /><Chev c="#999" /></FontInput>
                <FontInput $w={56}>18<Chev c="#999" /></FontInput>
                <Slot $w={28} $font={'20px "Open Sans"'}>A<Mark>^</Mark></Slot>
                <Slot $w={30} $font={'16px "Open Sans"'}>A<Mark>ˇ</Mark></Slot>
                <VSep />
                <Slot $w={36} $font={'20px "Open Sans"'}>A<ClearFmt /></Slot>
              </SmallRow>
              <SmallRow $h={24} $pl={2}>
                <Slot $w={26} $font={'700 16px "Open Sans"'}>B</Slot>
                <Slot $w={27} $font={'italic 16px "Liberation Serif"'}>I</Slot>
                <Slot $w={28} $font={'16px "Open Sans"'} $deco="underline">U</Slot>
                <Slot $w={28} $font={'700 16px "Open Sans"'}>S</Slot>
                <Slot $w={29} $font={'15px "Open Sans"'} $deco="line-through">ab</Slot>
                <Slot $w={23} $font={'15px "Open Sans"'}>AV</Slot>
                <Slot $w={23}>{GC}</Slot>
                <Slot $w={26} $font={'16px "Open Sans"'}>Aa</Slot>
                <Slot $w={14}>{GC}</Slot>
                <VSep $ml={10} />
                <Slot $w={36}><DrawSmall kind="pen" /></Slot>
                <Slot $w={8}>{GC}</Slot>
                <Slot $w={40}><BarGlyph>A</BarGlyph></Slot>
                <Slot $w={4}>{GC}</Slot>
              </SmallRow>
            </SmallCol>
            <GroupLabel $r={20}>Font</GroupLabel>
            <Launch />
          </Group>
          <Group $w={215}>
            <SmallCol $w={205} $ml={10} $gap={8}>
              <SmallRow>
                <Slot $w={28}><Bullets /></Slot><Slot $w={16}>{GC}</Slot>
                <Slot $w={32}><Numbers /></Slot><Slot $w={20}>{GC}</Slot>
                <VSep />
                <Slot $w={38}><LineSpacing /></Slot><Slot $w={8}>{GC}</Slot>
                <Slot $w={34}><SortIcon /></Slot><Slot $w={12}>{GC}</Slot>
              </SmallRow>
              <SmallRow>
                <Slot $w={28}><Indent /></Slot><Slot $w={28}><Indent more /></Slot>
                <VSep $ml={5} />
                <Slot $w={28}><Lines w={18} h={12} n={2} /></Slot><Slot $w={16}>{GC}</Slot>
                <Slot $w={36} />
                <Slot $w={34}><VAlign /></Slot><Slot $w={12}>{GC}</Slot>
              </SmallRow>
              <SmallRow>
                <Slot $w={28}><Lines ind={[[0, 20], [0, 14], [0, 20]]} /></Slot>
                <Slot $w={28}><Lines ind={[[0, 20], [3, 17], [0, 20]]} /></Slot>
                <Slot $w={28}><Lines ind={[[0, 20], [6, 20], [0, 20]]} /></Slot>
                <Slot $w={28}><Lines /></Slot>
                <Slot $w={28}><Lines n={4} /></Slot>
                <Slot $w={3} />
                <Slot $w={34}><SmartArt /></Slot><Slot $w={12}>{GC}</Slot>
              </SmallRow>
            </SmallCol>
            <GroupLabel $r={20}>Paragraph</GroupLabel>
            <Launch />
          </Group>
          <Group $w={235} $pt={11}>
            <BigBtn $w={60} $ml={5}>
              <ArtBox><ShapesArt /></ArtBox>Shapes<Chev />
            </BigBtn>
            <BigBtn $w={58} $ml={-2}>
              <ArtBox><ArrangeArt /></ArtBox>Arrange<Chev />
            </BigBtn>
            <BigBtn $w={56} $ml={-1} $off>
              <ArtBox><QuickArt /></ArtBox>Quick<span>Styles <Chev c={GREY} /></span>
            </BigBtn>
            <SmallCol $w={42} $ml={6} $gap={8}>
              <SmallRow $h={22}><DrawSmall kind="fill" /><Slot $w={22}>{GC}</Slot></SmallRow>
              <SmallRow $h={22}><DrawSmall kind="line" /><Slot $w={22}>{GC}</Slot></SmallRow>
              <SmallRow $h={22}><DrawSmall kind="erase" /><Slot $w={22}>{GC}</Slot></SmallRow>
            </SmallCol>
            <GroupLabel $r={20}>Drawing</GroupLabel>
            <Launch />
          </Group>
          <Group $w={68} $pt={7}>
            <BigBtn $w={67}>
              <EditBox><Lens size={22} strokeWidth={1.2} color="#333" /></EditBox>
              Editing
              <Chev />
            </BigBtn>
          </Group>
          <Group $w={73} $pt={11}>
            <BigBtn $w={72}>
              <ArtBox><MicArt /></ArtBox>Dictate<Chev />
            </BigBtn>
            <GroupLabel>Voice</GroupLabel>
          </Group>
          <Group $w={72} $pt={11}>
            <BigBtn $w={71}>
              <ArtBox><DesignArt /></ArtBox>Design<span>Ideas</span>
            </BigBtn>
            <GroupLabel>Designer</GroupLabel>
          </Group>
          <Collapse><ChevronUp size={18} strokeWidth={1.3} /></Collapse>
        </Ribbon>

        <Body>
          <ThumbPane>
            <ChevronRight size={14} strokeWidth={2} />
            <VertLabel>Thumbnails</VertLabel>
          </ThumbPane>
          <SlideArea>
            <Diagram />
          </SlideArea>
        </Body>

        <PptStatus>
          <StatusSlot $ml={8}>Slide 1 of 1</StatusSlot>
          <StatusSlot $ml={28}><SpellIcon /></StatusSlot>
          <StatusSlot $ml={21}>English (Malaysia)</StatusSlot>
          <StatusSlot $ml={534}><NotesIcon />Notes</StatusSlot>
          <StatusSlot $ml={21} $w={50} $on><ViewIcon kind="normal" /></StatusSlot>
          <StatusSlot $w={50}><ViewIcon kind="sorter" /></StatusSlot>
          <StatusSlot $w={50}><ViewIcon kind="read" /></StatusSlot>
          <StatusSlot $w={50}><ViewIcon kind="show" /></StatusSlot>
          <StatusSlot $ml={7}><Minus size={11} /></StatusSlot>
          <SliderTrack />
          <StatusSlot $ml={5}><svg width="11" height="11" viewBox="0 0 11 11" stroke="#555"><path d="M0 5.5H11M5.5 0V11" /></svg></StatusSlot>
          <StatusSlot $ml={18}>66%</StatusSlot>
          <StatusSlot $ml={15}><Fit /></StatusSlot>
        </PptStatus>
      </RightWin>
    </Windows>

    <TaskBar>
      <StartBtn><Winlogo /></StartBtn>
      <TaskSearch><Lens size={22} strokeWidth={1.4} />Type here to search</TaskSearch>
      <TaskIcon $w={64}><TaskView /></TaskIcon>
      <TaskIcon><Explorer /></TaskIcon>
      <TaskIcon><Mail /></TaskIcon>
      <TaskIcon><Office /></TaskIcon>
      <TaskIcon $open><Chrome /></TaskIcon>
      <TaskIcon><Word /></TaskIcon>
      <TaskIcon $open $active><Ppt /></TaskIcon>
      <TaskIcon $open><Vscode /></TaskIcon>
      <TaskIcon><Cmd /></TaskIcon>
      <TaskIcon><WhatsApp /></TaskIcon>
      <TaskIcon $open><Acrobat /></TaskIcon>
      <Tray>
        <TraySlot><ChevronUp size={20} strokeWidth={1.2} /></TraySlot>
        <TraySlot><Norton /></TraySlot>
        <TraySlot><Cloud /></TraySlot>
        <TraySlot><Battery /></TraySlot>
        <TraySlot><Wifi size={18} strokeWidth={1.2} color="#ccc" /></TraySlot>
        <TraySlot><Volume1 size={18} strokeWidth={1.2} /></TraySlot>
        <TrayText>ENG</TrayText>
        <Clock>11:50 AM<br />9/12/2020</Clock>
        <NoteIcon><NoteMark /></NoteIcon>
      </Tray>
    </TaskBar>
  </Screen>
);

export default App;
